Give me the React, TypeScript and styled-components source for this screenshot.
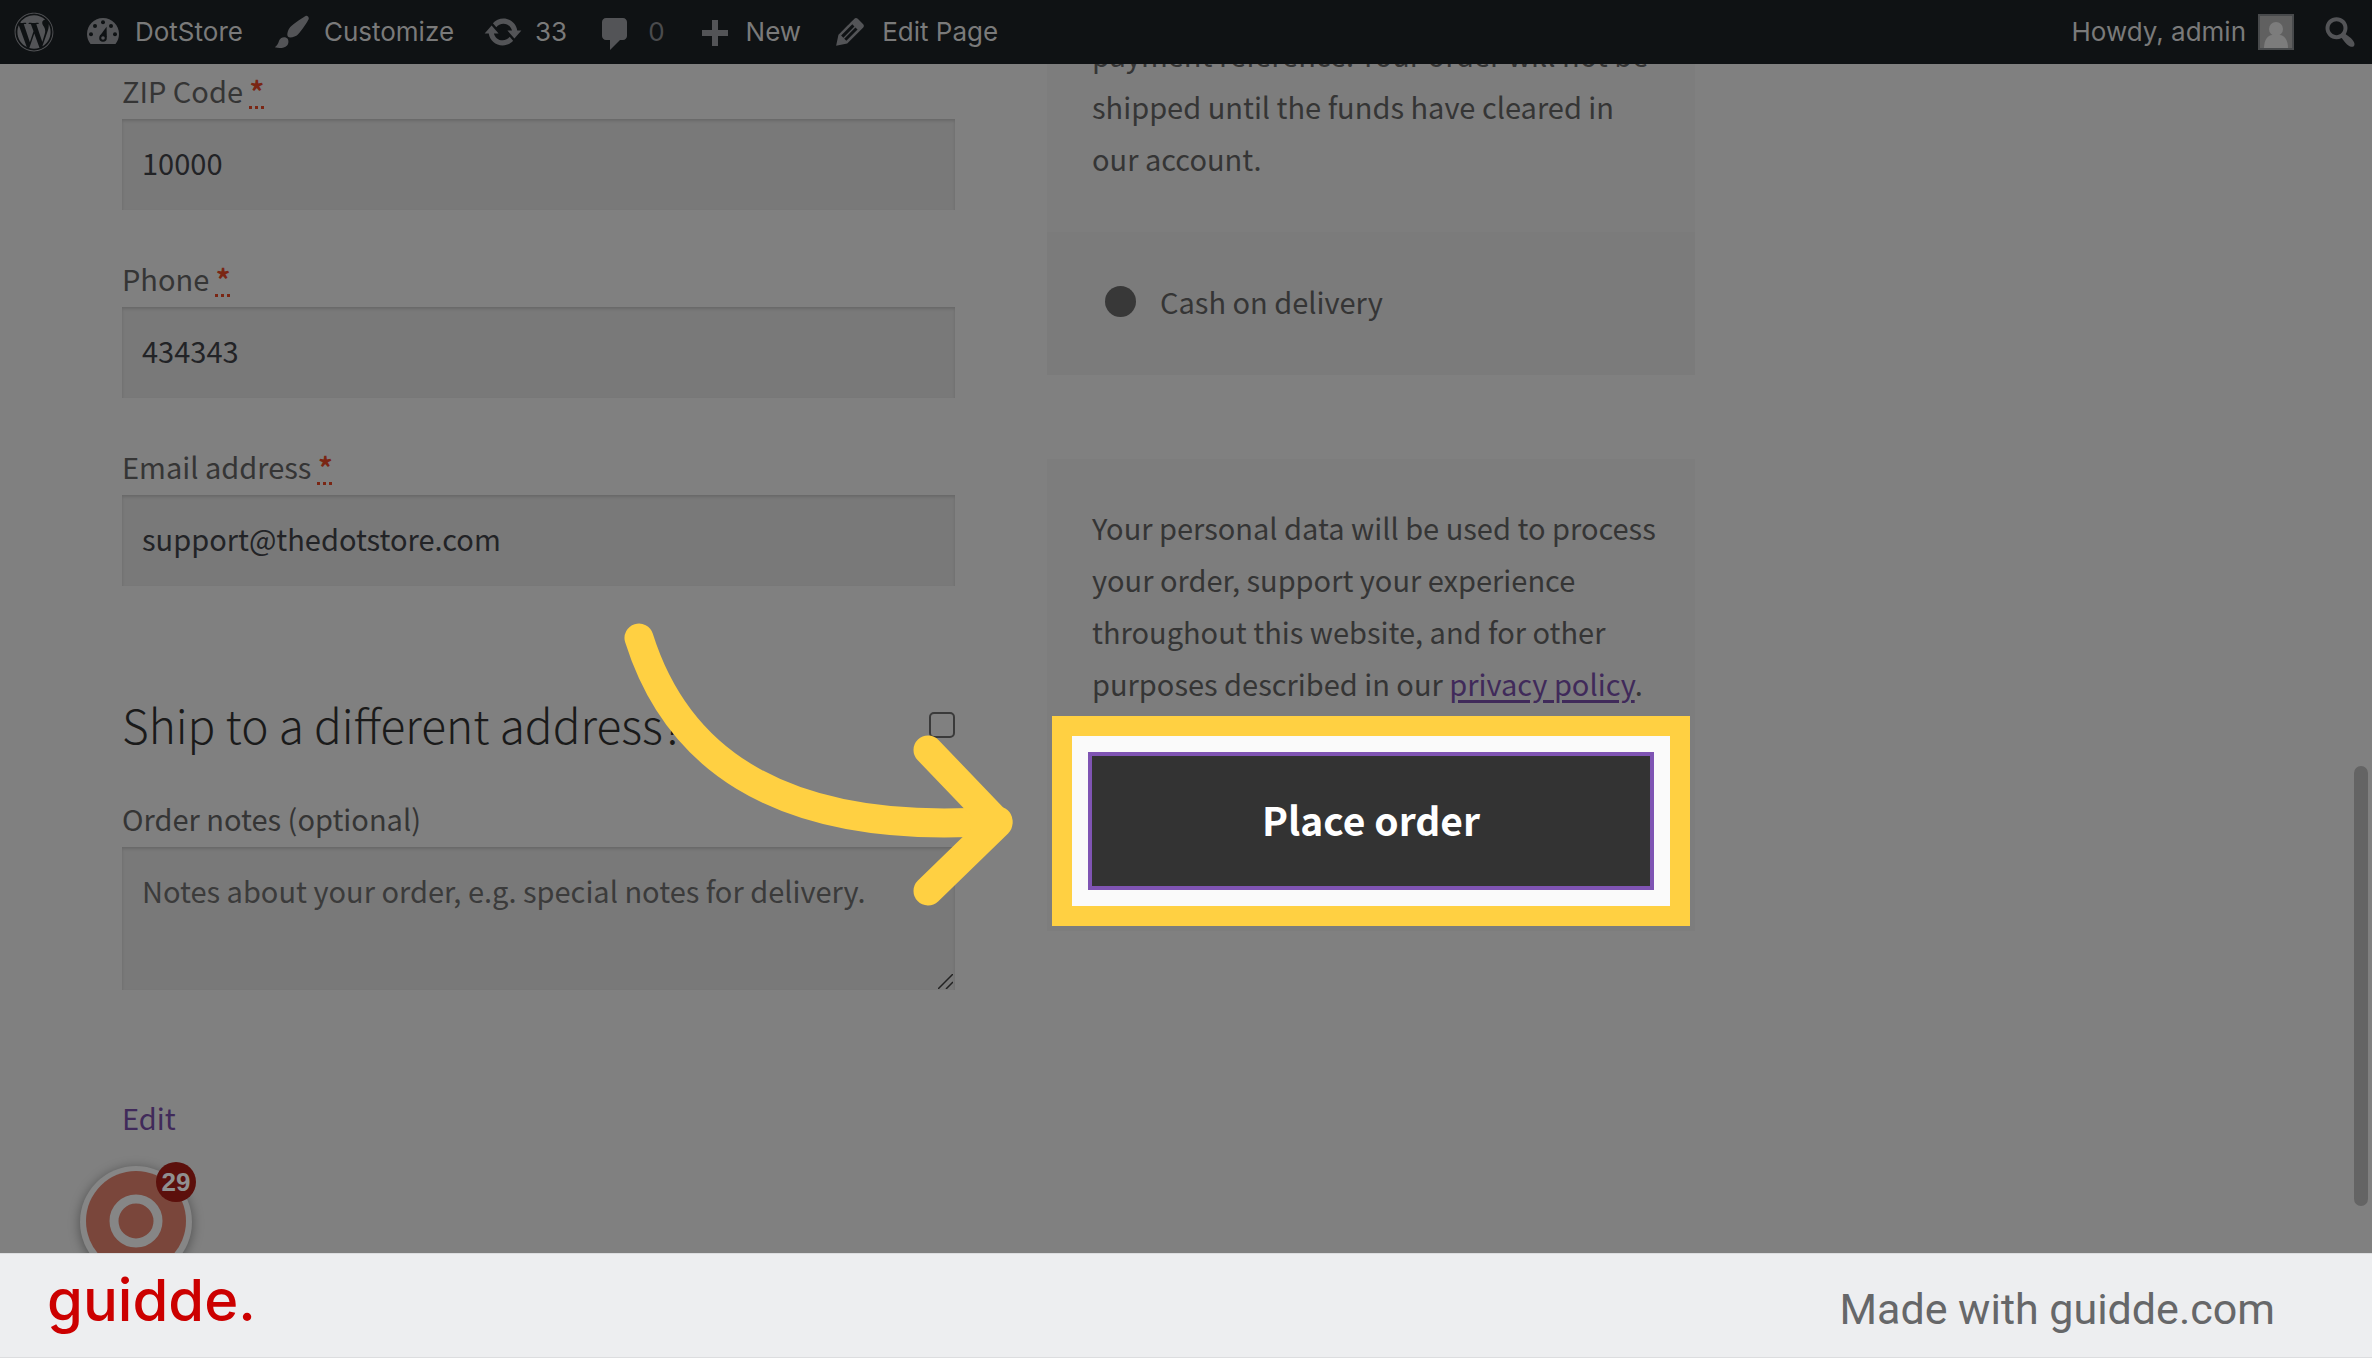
import React from "react";
import styled, { createGlobalStyle } from "styled-components";
import { FaWordpress } from "react-icons/fa";

const color = {
  page: "#808080",
  bar: "#0f1214",
  barText: "#7a7a7a",
  barIcon: "#535457",
  field: "#797979",
  panel: "#7d7d7d",
  panelDark: "#7b7b7b",
  text: "#353535",
  heading: "#1a1a1a",
  input: "#222326",
  link: "#402a5a",
  required: "#7a2614",
  yellow: "#ffd042",
};

const GlobalStyle = createGlobalStyle`
  * { box-sizing: border-box; }
  body {
    margin: 0;
    background: ${color.page};
    color: ${color.text};
    font: 400 29px/52px "Noto Sans CJK SC", "Noto Sans", sans-serif;
  }
`;

const Shell = styled.div`
  display: flex;
  flex-direction: column;
  height: 100vh;
  overflow: hidden;
`;

/* ---------- admin bar ---------- */

const AdminBar = styled.header`
  display: flex;
  justify-content: space-between;
  flex: none;
  height: 64px;
  padding: 0 12px 0 14px;
  background: ${color.bar};
  font: 400 26px/64px Inter, "Liberation Sans", sans-serif;
`;

const BarGroup = styled.nav<{ $gap: number }>`
  display: flex;
  align-items: center;
  gap: ${(p) => p.$gap}px;
`;

const BarLink = styled.a<{ $muted?: boolean }>`
  display: flex;
  align-items: center;
  gap: 12px;
  color: ${(p) => (p.$muted ? "#4a4b4d" : color.barText)};
  text-decoration: none;
  white-space: nowrap;

  svg {
    flex: none;
    fill: ${color.barIcon};
    color: ${color.barIcon};
  }
`;

const SearchButton = styled.button`
  display: flex;
  padding: 0;
  border: 0;
  background: none;
  fill: ${color.barIcon};
`;

const Avatar = styled.span`
  display: flex;
  width: 36px;
  height: 36px;
  border: 2px solid #484a4c;
  background: #606060;

  && svg {
    fill: #7c7c7c;
  }
`;

const BarIcon = ({ d, y = 0 }: { d: string; y?: number }) => (
  <svg width="40" height="40" viewBox={`0 ${y} 20 20`} fillRule="evenodd" aria-hidden="true">
    <path d={d} />
  </svg>
);

const icons = {
  brush:
    "M18.33 3.57s.27-.8-.31-1.36c-.53-.52-1.22-.24-1.22-.24-.61.3-5.76 3.47-7.67 5.57-.86.96-2.06 3.79-1.09 4.82.92.98 3.96-.17 4.79-1 2.06-2.06 5.21-7.17 5.5-7.79zM1.4 17.65c2.37-1.56 1.46-3.41 3.23-4.64.93-.65 2.22-.62 3.08.29.63.67.8 2.57-.16 3.46-1.57 1.45-4 1.55-6.15.89z",
  update:
    "M10.2 3.28c3.53 0 6.43 2.61 6.92 6h2.08l-3.5 4-3.5-4h2.32c-.45-1.97-2.21-3.45-4.32-3.45-1.45 0-2.73.71-3.54 1.78L4.95 5.66C6.23 4.2 8.11 3.28 10.2 3.28zm-.4 13.44c-3.52 0-6.43-2.61-6.92-6H.8l3.5-4c1.17 1.33 2.33 2.67 3.5 4H5.48c.45 1.97 2.21 3.45 4.32 3.45 1.45 0 2.73-.71 3.54-1.78l1.71 1.95c-1.28 1.46-3.15 2.38-5.25 2.38z",
  comment:
    "M5 2h8.5c1.1 0 2 .9 2 2v7c0 1.1-.9 2-2 2H12l-5 5v-5H5c-1.1 0-2-.9-2-2V4c0-1.1.9-2 2-2z",
  plus: "M17 7v3h-5v5H9v-5H4V7h5V2h3v5h5z",
  pencil:
    "M13.89 3.39l2.71 2.72c.46.46.42 1.24.03 1.64l-8.01 8.02-5.56 1.16 1.16-5.58s7.6-7.63 7.99-8.03c.39-.39 1.22-.39 1.68.07zm-2.73 2.79l-5.59 5.61 1.11 1.11 5.54-5.65zm-2.97 8.23l5.58-5.6-1.07-1.08-5.59 5.6z",
  search:
    "M12.14 4.18c1.87 1.87 2.11 4.75.72 6.89.12.1.22.21.36.31.2.16.47.36.81.59.34.24.56.39.66.47.42.31.73.57.94.78.32.32.6.65.84 1 .25.35.44.69.59 1.04.14.35.21.68.18 1-.02.32-.14.59-.36.81s-.49.34-.81.36c-.31.02-.65-.04-.99-.19-.35-.14-.7-.34-1.04-.59-.35-.24-.68-.52-1-.84-.21-.21-.47-.52-.77-.93-.1-.13-.25-.35-.47-.66-.22-.32-.4-.57-.56-.78-.16-.2-.29-.35-.44-.5-2.07 1.09-4.69.76-6.44-.98-2.14-2.15-2.14-5.64 0-7.78 2.15-2.15 5.63-2.15 7.78 0zm-1.41 6.36c1.36-1.37 1.36-3.58 0-4.95-1.37-1.37-3.59-1.37-4.95 0-1.37 1.37-1.37 3.58 0 4.95 1.36 1.37 3.58 1.37 4.95 0z",
};

const GaugeIcon = () => (
  <svg width="40" height="40" viewBox="0 1 20 20" aria-hidden="true">
    <path d="M3.76 17h12.48c1.1-1.37 1.76-3.11 1.76-5 0-4.42-3.58-8-8-8s-8 3.58-8 8c0 1.89.66 3.63 1.76 5z" />
    <g fill={color.bar}>
      <circle cx="10" cy="6.1" r="1" />
      <circle cx="6" cy="8" r="1" />
      <circle cx="14" cy="8" r="1" />
      <circle cx="4" cy="12.1" r="1" />
      <circle cx="16" cy="12.1" r="1" />
      <circle cx="10" cy="14" r="1.9" />
      <path d="M8.4 13l3.4-4.6.1 5.2z" />
    </g>
    <circle cx="10" cy="14" r=".9" />
  </svg>
);

/* ---------- checkout ---------- */

const Main = styled.main`
  position: relative;
  flex: 1;
  min-height: 0;
  overflow: hidden;
`;

const Columns = styled.div`
  display: grid;
  grid-template-columns: minmax(0, 833fr) minmax(0, 648fr);
  gap: 92px;
  max-width: 1695px;
  padding-left: 122px;
`;

const Billing = styled.form`
  display: flex;
  flex-direction: column;
  padding-top: 3px;
`;

const Field = styled.div`
  display: flex;
  flex-direction: column;
  margin-bottom: 45px;
`;

const Label = styled.label`
  padding-bottom: 6px;
  line-height: 46px;
`;

const Required = styled.abbr`
  color: ${color.required};
  font-weight: 700;
  text-decoration: underline dotted;
  text-decoration-thickness: 3px;
  text-underline-offset: 3px;
`;

const boxed = `
  display: block;
  width: 100%;
  margin: 0;
  border: 0;
  border-radius: 0;
  outline: 0;
  background: ${color.field};
  box-shadow: inset 0 2px 3px rgba(0, 0, 0, 0.14);
  color: ${color.input};
  font: inherit;
`;

const TextInput = styled.input`
  ${boxed}
  height: 91px;
  padding: 17px 20px 22px;
`;

const NotesBox = styled.div`
  position: relative;
`;

const Notes = styled.textarea`
  ${boxed}
  height: 143px;
  padding: 17px 20px;
  resize: none;

  &::placeholder {
    color: #3b3b3b;
    opacity: 1;
  }
`;

const Grip = styled.svg`
  position: absolute;
  right: 2px;
  bottom: 1px;
`;

const ShipHeading = styled.h3`
  margin: 61px 0 39px;
  color: ${color.heading};
  font-size: 46px;
  font-weight: 300;
  line-height: 64px;

  label {
    display: flex;
    align-items: center;
    justify-content: space-between;
  }
`;

const Checkbox = styled.input`
  appearance: none;
  width: 26px;
  height: 26px;
  margin: 2px 0 0;
  border: 2px solid #3a3a3a;
  border-radius: 5px;
`;

const EditLink = styled.a`
  align-self: flex-start;
  margin-top: 58px;
  color: ${color.link};
  line-height: 48px;
  text-decoration: none;
`;

const Review = styled.section`
  margin-top: -36px;
`;

const PaymentText = styled.p`
  margin: 0;
  padding: 0 40px 48px 45px;
  background: ${color.panel};
`;

const PaymentMethod = styled.label`
  display: flex;
  align-items: center;
  gap: 24px;
  height: 143px;
  padding: 0 58px 5px;
  background: ${color.panelDark};
`;

const Radio = styled.input`
  appearance: none;
  width: 31px;
  height: 31px;
  margin: 0;
  border-radius: 50%;
  background: #383838;
`;

const PlaceOrder = styled.div`
  margin-top: 84px;
  padding: 42px 45px 45px;
  background: ${color.panel};
`;

const Privacy = styled.p`
  margin: 0 -20px 47px 0;

  a {
    color: ${color.link};
    text-decoration-thickness: 3px;
    text-underline-offset: 4px;
  }
`;

const ButtonWrap = styled.div`
  position: relative;
`;

const OrderButton = styled.button`
  display: block;
  width: 100%;
  height: 130px;
  padding: 0 0 4px;
  border: 0;
  outline: 4px solid #7f54b3;
  background: #333;
  box-shadow: 0 0 0 20px #fafafa, 0 0 0 40px ${color.yellow};
  color: #fff;
  font: inherit;
  font-size: 39px;
  font-weight: 700;
`;

const Arrow = styled.svg`
  position: absolute;
  top: -136px;
  left: -473px;
  pointer-events: none;
`;

const ScrollThumb = styled.div`
  position: absolute;
  top: 702px;
  right: 4px;
  width: 14px;
  height: 440px;
  border-radius: 7px;
  background: #646464;
`;

const Widget = styled.button`
  position: absolute;
  bottom: -25px;
  left: 80px;
  width: 112px;
  height: 112px;
  padding: 0;
  border: 0;
  border-radius: 50%;
  background: #868686;
  box-shadow: 0 2px 12px rgba(0, 0, 0, 0.4);

  svg {
    display: block;
  }
`;

const Badge = styled.span`
  position: absolute;
  top: -4px;
  right: -4px;
  width: 40px;
  height: 40px;
  border-radius: 50%;
  background: #5c100c;
  color: #909090;
  font: 700 26px/40px "Liberation Sans", Arial, sans-serif;
  text-align: center;
`;

/* ---------- footer ---------- */

const Footer = styled.footer`
  display: flex;
  align-items: center;
  justify-content: space-between;
  flex: none;
  height: 105px;
  padding: 0 97px 0 47px;
  border: solid #dcdddf;
  border-width: 1px 0;
  background: #edeef0;
`;

const Brand = styled.a`
  padding-bottom: 11px;
  color: #c00;
  font: 500 58px/92px Inter, sans-serif;
  text-decoration: none;
`;

const Credit = styled.span`
  padding-top: 6px;
  color: #666769;
  font: 400 43px/52px Roboto, sans-serif;
`;

const fields = [
  { id: "zip", label: "ZIP Code", type: "text", value: "10000" },
  { id: "phone", label: "Phone", type: "tel", value: "434343" },
  { id: "email", label: "Email address", type: "email", value: "support@thedotstore.com" },
];

export default function App() {
  return (
    <Shell>
      <GlobalStyle />
      <AdminBar>
        <BarGroup $gap={29} aria-label="Toolbar">
          <BarLink href="#" aria-label="About WordPress">
            <FaWordpress size={40} />
          </BarLink>
          <BarLink href="#">
            <GaugeIcon />
            DotStore
          </BarLink>
          <BarLink href="#">
            <BarIcon d={icons.brush} />
            Customize
          </BarLink>
          <BarLink href="#">
            <BarIcon d={icons.update} />
            33
          </BarLink>
          <BarLink href="#" $muted>
            <BarIcon d={icons.comment} y={-1} />
            0
          </BarLink>
          <BarLink href="#">
            <BarIcon d={icons.plus} y={-2} />
            New
          </BarLink>
          <BarLink href="#">
            <BarIcon d={icons.pencil} />
            Edit Page
          </BarLink>
        </BarGroup>
        <BarGroup $gap={26} aria-label="Account">
          <BarLink href="#">
            Howdy, admin
            <Avatar>
              <svg width="32" height="32" viewBox="0 0 32 32" aria-hidden="true">
                <circle cx="16" cy="13" r="7" />
                <path d="M4 32c0-8 4-13 8-13h8c4 0 8 5 8 13z" />
              </svg>
            </Avatar>
          </BarLink>
          <SearchButton type="button" aria-label="Search">
            <BarIcon d={icons.search} />
          </SearchButton>
        </BarGroup>
      </AdminBar>

      <Main>
        <Columns>
          <Billing>
            {fields.map((f) => (
              <Field key={f.id}>
                <Label htmlFor={f.id}>
                  {f.label} <Required>*</Required>
                </Label>
                <TextInput id={f.id} type={f.type} defaultValue={f.value} />
              </Field>
            ))}
            <ShipHeading>
              <label>
                Ship to a different address?
                <Checkbox type="checkbox" />
              </label>
            </ShipHeading>
            <Field>
              <Label htmlFor="notes">Order notes (optional)</Label>
              <NotesBox>
                <Notes id="notes" placeholder="Notes about your order, e.g. special notes for delivery." />
                <Grip width="15" height="15" viewBox="0 0 15 15" stroke="#222" strokeWidth="1.5" aria-hidden="true">
                  <path d="M0 15L15 0M8 15l7-7" />
                </Grip>
              </NotesBox>
            </Field>
            <EditLink href="#">Edit</EditLink>
          </Billing>

          <Review>
            <PaymentText>
              payment reference. Your order will not be shipped until the funds have cleared in our account.
            </PaymentText>
            <PaymentMethod>
              <Radio type="radio" name="payment" />
              Cash on delivery
            </PaymentMethod>
            <PlaceOrder>
              <Privacy>
                Your personal data will be used to process your order, support your experience throughout this
                website, and for other purposes described in our <a href="#">privacy policy</a>.
              </Privacy>
              <ButtonWrap>
                <OrderButton type="button">Place order</OrderButton>
                <Arrow
                  width="400"
                  height="290"
                  viewBox="620 620 400 290"
                  fill="none"
                  stroke={color.yellow}
                  strokeWidth="29"
                  strokeLinecap="round"
                  strokeLinejoin="round"
                  aria-hidden="true"
                >
                  <path d="M640 638C674 746 766 838 999 821" />
                  <path d="M929 750L999 823L929 891" />
                </Arrow>
              </ButtonWrap>
            </PlaceOrder>
          </Review>
        </Columns>
        <ScrollThumb />
        <Widget type="button" aria-label="Notifications">
          <svg width="112" height="112" viewBox="0 0 112 112" aria-hidden="true">
            <circle cx="56" cy="55" r="50" fill="#7a463b" />
            <circle cx="56" cy="55" r="22" fill="none" stroke="#868686" strokeWidth="9" />
          </svg>
          <Badge>29</Badge>
        </Widget>
      </Main>

      <Footer>
        <Brand href="#">guidde.</Brand>
        <Credit>Made with guidde.com</Credit>
      </Footer>
    </Shell>
  );
}
